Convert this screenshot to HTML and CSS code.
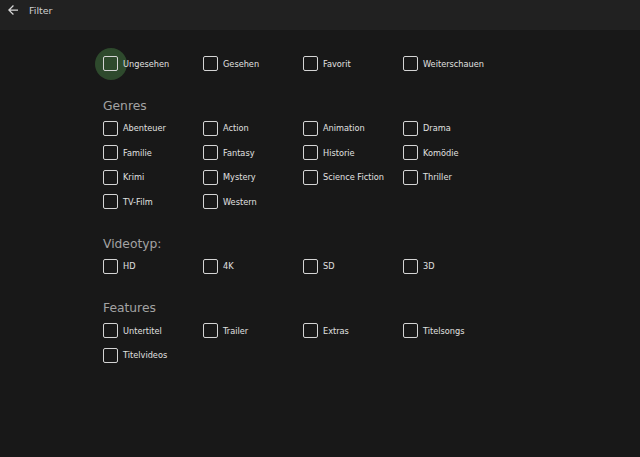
FILE: index.html
```html
<!DOCTYPE html>
<html lang="de">
<head>
<meta charset="utf-8">
<title>Filter</title>
<link rel="stylesheet" href="styles.css">
</head>
<body>
<header class="topbar">
  <svg class="back" viewBox="4 4 16 16" width="10" height="10" aria-hidden="true"><path d="M20 11H7.83l5.59-5.59L12 4l-8 8 8 8 1.41-1.41L7.83 13H20v-2z" fill="#d8d8d8"/></svg>
  <span class="title">Filter</span>
</header>
<main class="content">
  <div class="grid">
    <label class="item focused"><span class="box"></span><span class="lbl">Ungesehen</span></label>
    <label class="item"><span class="box"></span><span class="lbl">Gesehen</span></label>
    <label class="item"><span class="box"></span><span class="lbl">Favorit</span></label>
    <label class="item"><span class="box"></span><span class="lbl">Weiterschauen</span></label>
  </div>

  <h2 class="heading">Genres</h2>
  <div class="grid">
    <label class="item"><span class="box"></span><span class="lbl">Abenteuer</span></label>
    <label class="item"><span class="box"></span><span class="lbl">Action</span></label>
    <label class="item"><span class="box"></span><span class="lbl">Animation</span></label>
    <label class="item"><span class="box"></span><span class="lbl">Drama</span></label>
    <label class="item"><span class="box"></span><span class="lbl">Familie</span></label>
    <label class="item"><span class="box"></span><span class="lbl">Fantasy</span></label>
    <label class="item"><span class="box"></span><span class="lbl">Historie</span></label>
    <label class="item"><span class="box"></span><span class="lbl">Komödie</span></label>
    <label class="item"><span class="box"></span><span class="lbl">Krimi</span></label>
    <label class="item"><span class="box"></span><span class="lbl">Mystery</span></label>
    <label class="item"><span class="box"></span><span class="lbl">Science Fiction</span></label>
    <label class="item"><span class="box"></span><span class="lbl">Thriller</span></label>
    <label class="item"><span class="box"></span><span class="lbl">TV-Film</span></label>
    <label class="item"><span class="box"></span><span class="lbl">Western</span></label>
  </div>

  <h2 class="heading">Videotyp:</h2>
  <div class="grid">
    <label class="item"><span class="box"></span><span class="lbl">HD</span></label>
    <label class="item"><span class="box"></span><span class="lbl">4K</span></label>
    <label class="item"><span class="box"></span><span class="lbl">SD</span></label>
    <label class="item"><span class="box"></span><span class="lbl">3D</span></label>
  </div>

  <h2 class="heading">Features</h2>
  <div class="grid">
    <label class="item"><span class="box"></span><span class="lbl">Untertitel</span></label>
    <label class="item"><span class="box"></span><span class="lbl">Trailer</span></label>
    <label class="item"><span class="box"></span><span class="lbl">Extras</span></label>
    <label class="item"><span class="box"></span><span class="lbl">Titelsongs</span></label>
    <label class="item"><span class="box"></span><span class="lbl">Titelvideos</span></label>
  </div>
</main>
</body>
</html>
```

FILE: styles.css
```css
html, body {
  margin: 0;
  padding: 0;
  background: #181818;
  height: 100%;
}
body {
  font-family: "DejaVu Sans", sans-serif;
  color: #dcdcdc;
}
.topbar {
  height: 30px;
  background: #212121;
  display: flex;
  align-items: center;
  padding-left: 8px;
  box-sizing: border-box;
}
.back {
  display: block;
  margin-top: -10px;
}
.title {
  margin-left: 11px;
  margin-top: -10px;
  font-size: 9.5px;
  color: #cfcfcf;
}
.content {
  padding: 21.5px 0 0 103px;
}
.grid {
  display: grid;
  grid-template-columns: repeat(4, 100px);
  grid-auto-rows: 24.5px;
}
.item {
  position: relative;
  display: flex;
  align-items: center;
}
.item.focused::before {
  content: "";
  position: absolute;
  left: -8.5px;
  top: 50%;
  width: 32px;
  height: 32px;
  margin-top: -16px;
  border-radius: 50%;
  background: #2e4a2d;
}
.box {
  position: relative;
  width: 15px;
  height: 15px;
  box-sizing: border-box;
  border: 1.5px solid #d4d4d4;
  border-radius: 2px;
  flex: none;
}
.lbl {
  position: relative;
  margin-left: 5px;
  font-size: 8.2px;
  color: #e0e0e0;
  white-space: nowrap;
}
.heading {
  margin: 22.5px 0 2.5px 0;
  font-size: 12.3px;
  line-height: 15px;
  font-weight: normal;
  color: #a3a3a3;
}
```
